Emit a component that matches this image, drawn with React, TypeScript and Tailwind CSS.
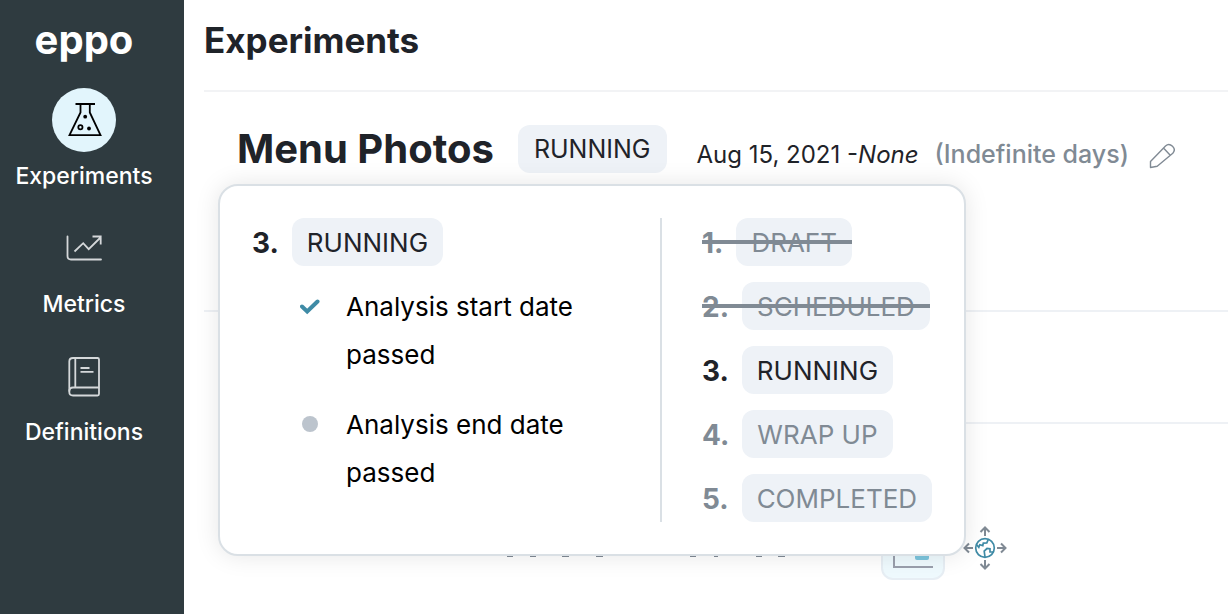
import React from "react";
import clsx from "clsx";

function FlaskIcon() {
  return (
    <svg viewBox="0 0 64 64" className="size-16" fill="none" stroke="#000" strokeWidth="1.8" aria-hidden="true">
      <path d="M23.5 16H43M28.500 16v8.500L17.500 47.200h31L37.800 24.500V16" strokeLinejoin="miter" />
      <circle cx="28.400" cy="39.300" r="2.100" />
      <circle cx="33.200" cy="28.700" r="1.900" fill="#000" stroke="none" />
      <circle cx="37" cy="40.500" r="1.900" fill="#000" stroke="none" />
    </svg>
  );
}

function TrendIcon() {
  return (
    <svg viewBox="0 0 64 64" className="size-16" fill="none" stroke="#d5d8da" strokeWidth="1.8" aria-hidden="true">
      <path d="M15.500 20.500v19.500q0 3.500 3.500 3.500h30" strokeLinecap="round" />
      <path d="M22.500 35.500l8.700-8.300 5.500 6L49 21M40.500 20.500h8.200v8" />
    </svg>
  );
}

function BookIcon() {
  return (
    <svg viewBox="0 0 64 64" className="size-16" fill="none" stroke="#d5d8da" strokeWidth="1.8" aria-hidden="true">
      <path d="M21 14h24.500q1.500 0 1.500 1.500v34.500q0 1.500-1.500 1.500H21q-3.700 0-3.700-3.500V17.500q0-3.500 3.700-3.500z" />
      <path d="M17.300 47.500q0-4 3.700-4h26M23.300 14V43.500M28.500 24h9M28.500 27.900h13" />
    </svg>
  );
}

function PencilIcon() {
  return (
    <svg viewBox="0 0 26 26" className="size-[26px]" fill="none" stroke="#808a94" strokeWidth="1.400" strokeLinejoin="round" aria-hidden="true">
      <path d="M1.500 24.500V18.500L16.500 3q3.500-3 7 .3t.3 7L8.200 23.300zM14.500 5l6.500 7" />
    </svg>
  );
}

function MoveGlobeIcon() {
  return (
    <svg viewBox="0 0 44 44" className="size-11" fill="none" aria-hidden="true">
      <g stroke="#808a94" strokeWidth="2">
        <path d="M22 10V2M17.500 6L22 1.500 26.500 6" />
        <path d="M22 34V42M17.500 38l4.500 4.500 4.500-4.500" />
        <path d="M10 22H1.500M6 17.500L1.500 22 6 26.500" />
        <path d="M34 22h8.500M38 17.500l4.500 4.500-4.500 4.500" />
      </g>
      <g stroke="#3f8ba6" strokeWidth="1.700">
        <circle cx="22" cy="22" r="9.300" />
        <path d="M13.500 18.500l2.300 2.800 1-2.500 3 .8.500-2.500 3.500-.2 1.500-3.500" />
        <path d="M22 31l-.8-6 2.800-2.500 3 .3v3.200h3.500" />
      </g>
    </svg>
  );
}

function ChartIcon() {
  return (
    <svg viewBox="0 0 60 60" className="size-[60px]" aria-hidden="true">
      <path d="M11 14v35h39" fill="none" stroke="#9a9fac" strokeWidth="2" />
      <rect x="32" y="20" width="14" height="22" rx="2" fill="#7cc5dd" />
    </svg>
  );
}

function Chip({ children, small = false }: { children: React.ReactNode; small?: boolean }) {
  return (
    <span
      className={clsx(
        "inline-block rounded-xl bg-[#eef2f7] whitespace-nowrap",
        small ? "px-4 text-[25px] leading-[48px]" : "px-[15px] pt-0.5 text-[26px] leading-[46px]",
      )}
    >
      {children}
    </span>
  );
}

type State = "past" | "current" | "future";

function Step({ n, name, state }: { n: number; name: string; state: State }) {
  return (
    <div
      className={clsx(
        "relative flex w-fit items-center gap-[13px]",
        state === "current" ? "text-[#1f2329]" : "text-[#808a94]",
      )}
    >
      <span className="pt-0.5 text-[28px] leading-[46px] font-bold">{n}.</span>
      <Chip>{name}</Chip>
      {state === "past" && <span className="absolute inset-x-0 top-[22px] h-1 bg-[#808a94]" />}
    </div>
  );
}

const steps: { name: string; state: State }[] = [
  { name: "DRAFT", state: "past" },
  { name: "SCHEDULED", state: "past" },
  { name: "RUNNING", state: "current" },
  { name: "WRAP UP", state: "future" },
  { name: "COMPLETED", state: "future" },
];

function StatusPopover() {
  return (
    <div
      role="dialog"
      aria-label="Experiment status"
      className="absolute top-full -left-[19px] z-10 mt-[11px] flex rounded-[20px] border-2 border-[#dae0e5] bg-white p-8 shadow-[0_0_24px_rgba(0,0,0,0.1)]"
    >
      <div className="w-[408px] shrink-0">
        <Step n={3} name="RUNNING" state="current" />
        <ul className="mt-[17px] flex flex-col gap-[22px] pr-12 pl-12 text-[26px] leading-[48px] text-black">
          <li className="flex gap-[26px]">
            <svg viewBox="0 0 20 48" className="h-12 w-5 shrink-0" aria-label="Done">
              <path d="M2 23.500l5.200 5L17.500 18.500" fill="none" stroke="#3f8ba6" strokeWidth="4" strokeLinecap="round" />
            </svg>
            Analysis start date passed
          </li>
          <li className="flex gap-[26px]">
            <svg viewBox="0 0 20 48" className="h-12 w-5 shrink-0" aria-label="Pending">
              <circle cx="10" cy="23" r="8" fill="#bcc4cd" />
            </svg>
            Analysis end date passed
          </li>
        </ul>
      </div>
      <ol className="flex flex-col gap-4 border-l-2 border-[#dae0e5] pl-10">
        {steps.map((step, i) => (
          <li key={step.name}>
            <Step n={i + 1} name={step.name} state={step.state} />
          </li>
        ))}
      </ol>
    </div>
  );
}

const nav = [
  { label: "Experiments", icon: <FlaskIcon />, active: true },
  { label: "Metrics", icon: <TrendIcon />, active: false },
  { label: "Definitions", icon: <BookIcon />, active: false },
];

export default function App() {
  return (
    <div className="flex min-h-screen overflow-hidden bg-white font-['Inter',sans-serif] text-[#1f2329]">
      <aside className="w-46 shrink-0 bg-[#2f3b40] text-white">
        <div className="pt-4 pb-6 pr-4 text-center text-[40px] leading-[48px] font-bold">eppo</div>
        <nav className="flex flex-col pr-4">
          {nav.map((item) => (
            <a key={item.label} href="#" className="flex h-32 flex-col items-center">
              <span className={clsx("rounded-full", item.active && "bg-[#e2f5fc]")}>{item.icon}</span>
              <span className="text-[23px] leading-[48px] font-medium">{item.label}</span>
            </a>
          ))}
        </nav>
      </aside>

      <main className="min-w-0 flex-1 pl-5">
        <header className="border-b-2 border-[#f2f3f5] pt-4 pb-[26px]">
          <h1 className="text-[35px] leading-[48px] font-bold">Experiments</h1>
        </header>

        <section className="border-b-2 border-[#eef1f5] pt-[33px] pb-[137px] pl-[33px]">
          <div className="relative flex w-fit items-baseline">
            <h2 className="text-[40px] leading-[48px] font-bold whitespace-nowrap">Menu Photos</h2>
            <button type="button" className="ml-6 self-center">
              <Chip small>RUNNING</Chip>
            </button>
            <p className="ml-[30px] text-[24px] leading-9 whitespace-nowrap">
              Aug 15, 2021 -<em>None</em>
            </p>
            <p className="ml-4 text-[25px] leading-9 font-medium whitespace-nowrap text-[#808a94]">(Indefinite days)</p>
            <button type="button" aria-label="Edit dates" className="ml-5 self-end pb-1">
              <PencilIcon />
            </button>
            <StatusPopover />
          </div>
        </section>

        <section className="pl-8">
          <div className="h-28 border-b-2 border-[#eef1f5]" />
          <div className="mt-[92px] flex items-center">
            <svg viewBox="0 0 290 64" className="ml-[264px] h-16 w-[290px]" aria-hidden="true">
              <path
                d="M7 40.500h6M30 40.500h6M62 40.500h7M96 40.500h7M190 40.500h6M214 40.500h4M256 40.500h6M278 40.500h7"
                stroke="#808a94"
                strokeWidth="1"
              />
            </svg>
            <button
              type="button"
              aria-label="Show chart"
              className="ml-[91px] rounded-xl border-2 border-[#e7eef4] bg-[#effafe]"
            >
              <ChartIcon />
            </button>
            <button type="button" aria-label="Explore" className="ml-[18px]">
              <MoveGlobeIcon />
            </button>
          </div>
        </section>
      </main>
    </div>
  );
}
